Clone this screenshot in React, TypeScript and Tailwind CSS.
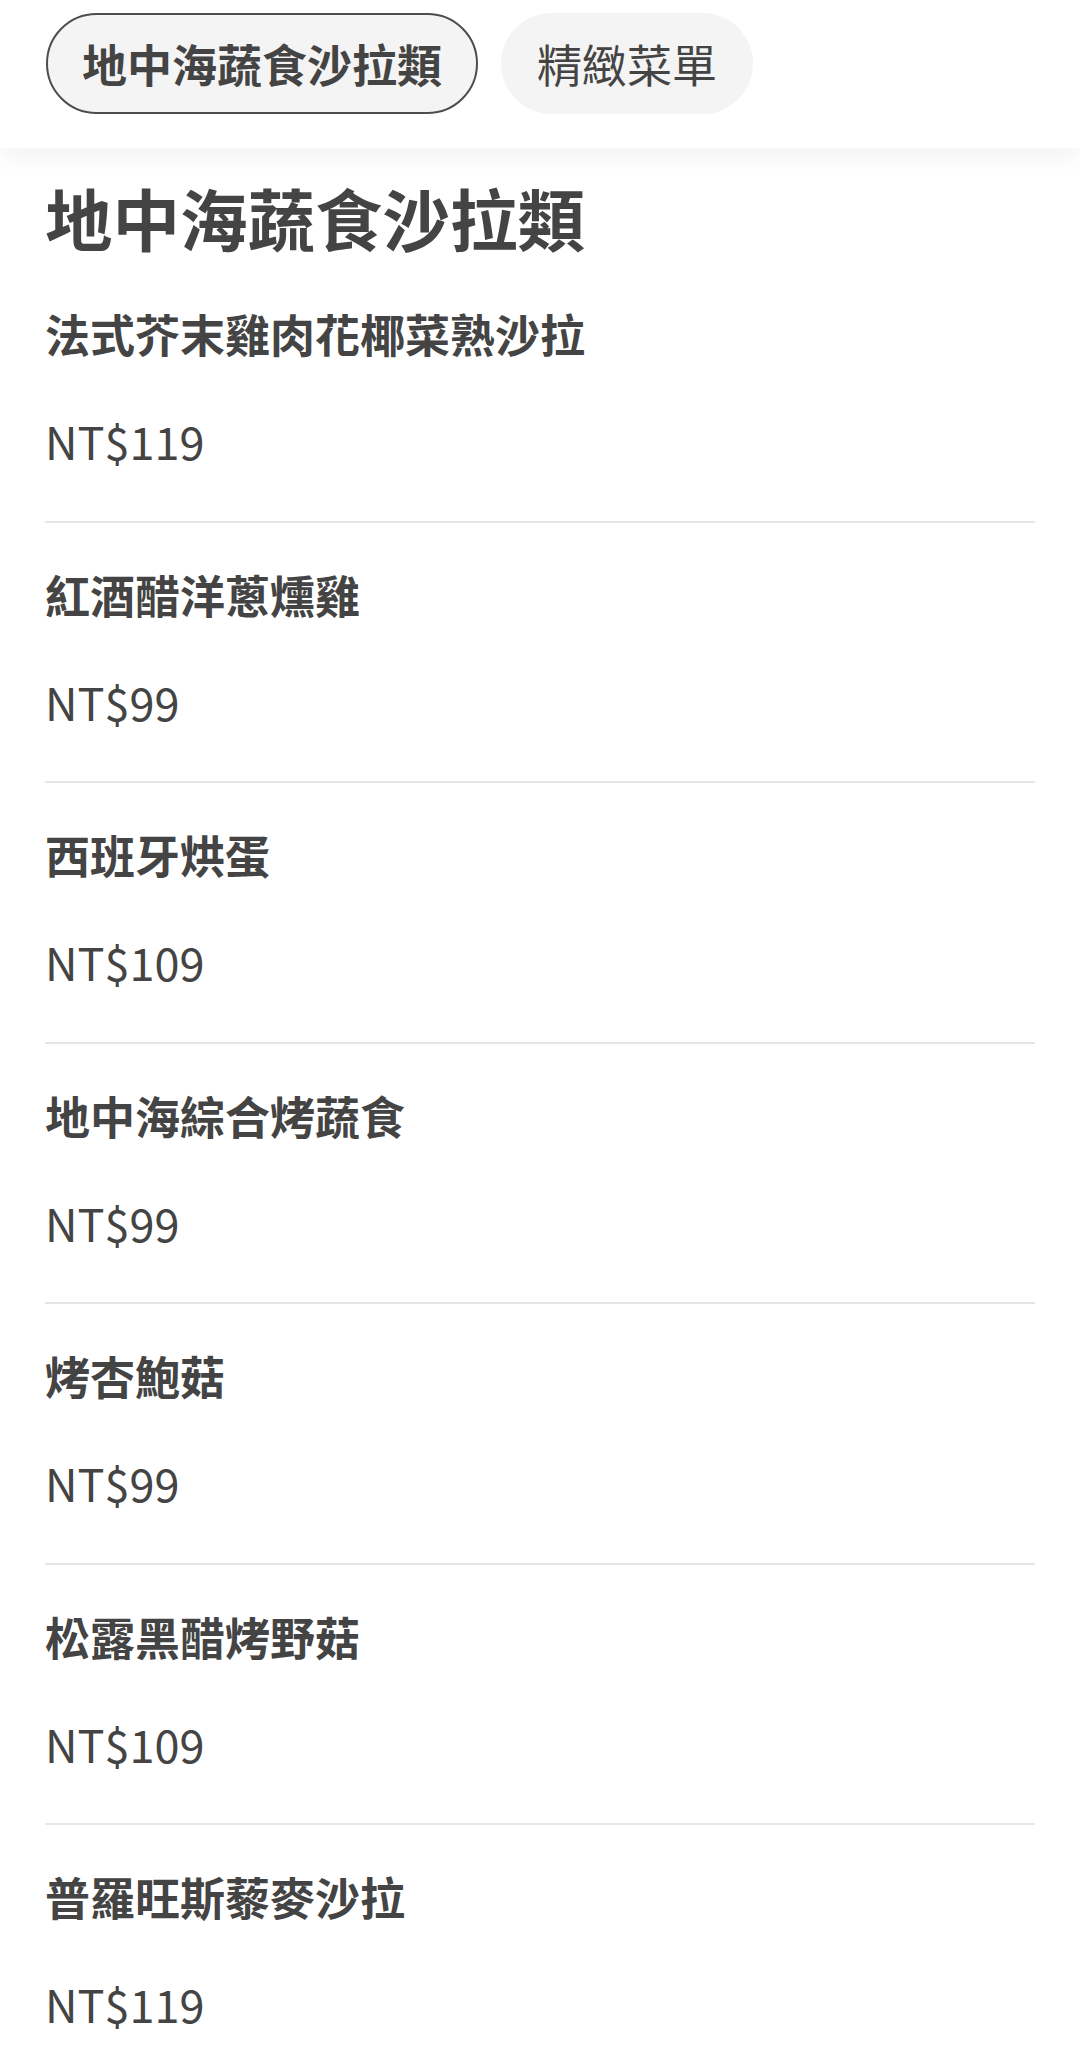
import React from "react";

const items = [
  { name: "法式芥末雞肉花椰菜熟沙拉", price: "NT$119" },
  { name: "紅酒醋洋蔥燻雞", price: "NT$99" },
  { name: "西班牙烘蛋", price: "NT$109" },
  { name: "地中海綜合烤蔬食", price: "NT$99" },
  { name: "烤杏鮑菇", price: "NT$99" },
  { name: "松露黑醋烤野菇", price: "NT$109" },
  { name: "普羅旺斯藜麥沙拉", price: "NT$119" },
];

export default function App() {
  return (
    <div
      className="min-h-screen bg-white text-[#444444]"
      style={{ fontFamily: '"Noto Sans CJK TC", "Noto Sans", sans-serif' }}
    >
      <header className="relative z-10 bg-white h-[148px] pt-[13px] pl-[46px] shadow-[0_10px_24px_rgba(0,0,0,0.05)]">
        <div className="flex gap-[23px]">
          <div className="h-[101px] flex items-center px-[34px] rounded-full bg-[#f4f4f4] border-2 border-[#4d4d4d] text-[45px] font-bold leading-none">
            地中海蔬食沙拉類
          </div>
          <div className="h-[101px] flex items-center px-[36px] rounded-full bg-[#f4f4f4] text-[45px] font-normal leading-none">
            精緻菜單
          </div>
        </div>
      </header>
      <main className="px-[45px] pt-[28px]">
        <h2 className="text-[67.5px] font-bold leading-[81px] mb-[5px]">地中海蔬食沙拉類</h2>
        <ul>
          {items.map((it) => (
            <li key={it.name} className="pt-[38px] pb-[46px] border-b-2 border-[#e6e6e6]">
              <div className="text-[45px] font-bold leading-[67.5px]">{it.name}</div>
              <div className="mt-[39.5px] text-[45px] font-normal leading-[67.5px]">{it.price}</div>
            </li>
          ))}
        </ul>
      </main>
    </div>
  );
}
